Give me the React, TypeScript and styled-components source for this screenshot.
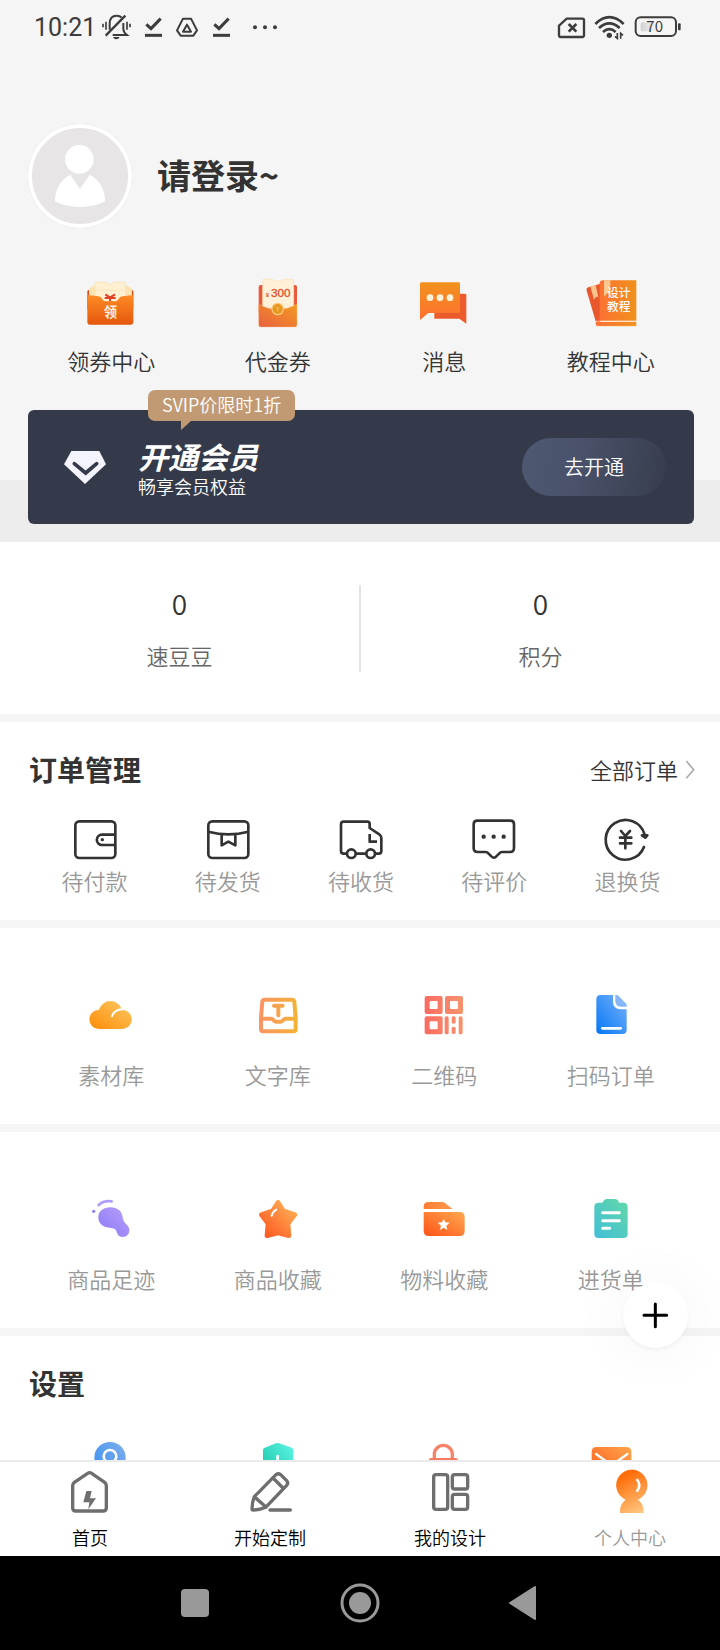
import React from "react";
import styled, { createGlobalStyle } from "styled-components";

const GlobalStyle = createGlobalStyle`
  *, *::before, *::after { box-sizing: border-box; }
  body {
    margin: 0;
    font-family: "Noto Sans CJK SC", "Noto Sans", sans-serif;
    font-weight: 350;
    color: #333;
    background: #fff;
  }
  h1, h2, p { margin: 0; }
  a { color: inherit; text-decoration: none; }
  button { padding: 0; border: 0; background: none; color: inherit; font: inherit; cursor: pointer; }
  svg { display: block; flex: none; overflow: visible; }
`;

/* ---------- layout ---------- */

const Screen = styled.div`
  position: relative;
  display: flex;
  flex-direction: column;
  height: 100vh;
`;

const Content = styled.main`
  flex: 1;
  min-height: 0;
  overflow-y: auto;
  scrollbar-width: none;
`;

const Header = styled.header`
  padding-bottom: 18px;
  background: linear-gradient(to top, #ededed 62px, #f5f5f5 62px);
`;

const StatusBar = styled.div`
  display: flex;
  align-items: center;
  justify-content: space-between;
  height: 54px;
  padding: 0 39px 0 34px;
  color: #3c3c3c;
`;

const StatusGroup = styled.div<{ $gap: number }>`
  display: flex;
  align-items: center;
  gap: ${(p) => p.$gap}px;
`;

const Clock = styled.time`
  width: 52px;
  padding-top: 2px;
  font: 400 25px/30px Roboto, sans-serif;
  white-space: nowrap;
`;

const More = styled.span`
  padding-left: 8px;
`;

const Profile = styled.a`
  display: flex;
  align-items: center;
  gap: 25px;
  padding: 70px 28px 49px;
`;

const Avatar = styled.span`
  width: 104px;
  height: 104px;
  border: 4px solid #fff;
  border-radius: 50%;
  background: #e7e5e6;
  box-shadow: 0 0 1px #ccc;
`;

const ProfileName = styled.h1`
  padding-bottom: 2px;
  font-size: 34px;
  line-height: 48px;
  font-weight: 700;
`;

const Row = styled.div`
  display: flex;
  padding: 0 26px 0 28px;
`;

const Item = styled.a<{ $gap: number; $muted?: boolean }>`
  display: flex;
  flex: 1 1 0;
  flex-direction: column;
  align-items: center;
  gap: ${(p) => p.$gap}px;
  font-size: 22px;
  line-height: 32px;
  color: ${(p) => (p.$muted ? "#999" : "#333")};
`;

const VipCard = styled.section`
  position: relative;
  display: flex;
  align-items: center;
  height: 114px;
  margin: 34px 26px 0 28px;
  padding: 0 28px 0 36px;
  border-radius: 6px;
  background: #343a4a;
  color: #fff;
`;

const VipText = styled.div`
  flex: 1;
  padding: 2px 0 0 32px;
`;

const VipTitle = styled.h2`
  font-size: 30px;
  line-height: 36px;
  font-style: italic;
  font-weight: 700;
`;

const VipNote = styled.p`
  font-size: 18px;
  line-height: 24px;
`;

const VipButton = styled.button`
  width: 144px;
  height: 58px;
  border-radius: 29px;
  background: linear-gradient(100deg, #4e5871 0%, #49526a 40%, #373d4d 100%);
  font-size: 20px;
  line-height: 28px;
`;

const VipBadge = styled.span`
  position: absolute;
  top: -20px;
  left: 120px;
  padding: 0 14px 2px;
  border-radius: 7px;
  background: #c19a74;
  font-size: 18px;
  line-height: 29px;
  white-space: nowrap;

  &::after {
    content: "";
    position: absolute;
    top: 100%;
    left: 33px;
    border-top: 9px solid #c19a74;
    border-right: 10px solid transparent;
  }
`;

const Panel = styled.section<{ $pad: string }>`
  padding: ${(p) => p.$pad};
  background: #fff;
  & + & { border-top: 8px solid #f5f5f5; }
`;

const Stats = styled.div`
  display: flex;
`;

const Stat = styled.a`
  flex: 1 1 0;
  height: 87px;
  text-align: center;
  & + & { border-left: 2px solid #e4e4e4; }
`;

const StatValue = styled.p`
  font-size: 28px;
  line-height: 36px;
`;

const StatLabel = styled.p`
  padding-top: 18px;
  font-size: 22px;
  line-height: 32px;
  color: #666;
`;

const PanelHead = styled.div<{ $gap: number }>`
  display: flex;
  align-items: center;
  justify-content: space-between;
  padding: 0 25px ${(p) => p.$gap}px 29px;
`;

const PanelTitle = styled.h2`
  font-size: 28px;
  line-height: 40px;
  font-weight: 700;
`;

const AllLink = styled.a`
  display: flex;
  align-items: center;
  gap: 8px;
  font-size: 22px;
  line-height: 32px;
`;

const AddButton = styled.button`
  position: absolute;
  right: 32px;
  bottom: 302px;
  display: grid;
  place-items: center;
  width: 65px;
  height: 65px;
  border-radius: 50%;
  background: #fff;
  box-shadow: 0 2px 5px rgba(0, 0, 0, 0.06), 0 2px 60px 6px rgba(0, 0, 0, 0.04);
`;

const TabBar = styled.nav`
  display: flex;
  padding: 8px 0 7px;
  border-top: 2px solid #ebebeb;
  background: #fff;
`;

const Tab = styled.a<{ $active?: boolean }>`
  display: flex;
  flex: 1 1 0;
  flex-direction: column;
  align-items: center;
  gap: 11px;
  font-size: 18px;
  line-height: 24px;
  color: ${(p) => (p.$active ? "#999" : "#000")};
`;

const SystemBar = styled.div`
  display: flex;
  align-items: center;
  justify-content: center;
  gap: 125px;
  height: 94px;
  background: #000;
`;

/* ---------- icons ---------- */

type Stop = [string, string];

const Fade = ({ id, colors, dir = "up" }: { id: string; colors: Stop; dir?: "up" | "down" | "right" | "diag" }) => {
  const ends = {
    up: { x1: 0, y1: 1, x2: 1, y2: 0 },
    down: { x1: 0, y1: 0, x2: 0, y2: 1 },
    right: { x1: 0, y1: 0, x2: 1, y2: 0 },
    diag: { x1: 0, y1: 0, x2: 1, y2: 1 },
  }[dir];
  return (
    <linearGradient id={id} {...ends}>
      <stop offset="0" stopColor={colors[0]} />
      <stop offset="1" stopColor={colors[1]} />
    </linearGradient>
  );
};

const Art = ({ box, w, h = w, children }: { box: string; w: number; h?: number; children: React.ReactNode }) => (
  <svg viewBox={box} width={w} height={h} fill="none" aria-hidden="true">
    {children}
  </svg>
);

const MutedBell = () => (
  <Art box="300 41 90 78" w={30} h={26}>
    <g stroke="#3c3c3c" strokeWidth="6">
      <path d="M329 88V70q0-24 21-24q10 0 15 6M370 68V86q0 9 11 18H338" />
      <path d="M317 106 376 46" strokeWidth="7" />
      <path d="M309 70V81M318 64V88M381 64V88M390 70V81" strokeWidth="5" />
    </g>
    <path d="M339 110H359q-3 7-10 7t-10-7Z" fill="#3c3c3c" />
  </Art>
);

const DoneMark = () => (
  <Art box="432 41 54 78" w={18} h={26}>
    <path d="M439 72 453 85 482 55" stroke="#3c3c3c" strokeWidth="9" />
    <path d="M435 105H486" stroke="#3c3c3c" strokeWidth="9" />
  </Art>
);

const DriveMark = () => (
  <Art box="528 41 66 78" w={22} h={26}>
    <g stroke="#3c3c3c" strokeWidth="6" strokeLinejoin="round">
      <path d="M549 55H573L591 90 580 106H542L531 90Z" />
      <path d="M561 73 573 94H549Z" />
    </g>
  </Art>
);

const MoreDots = () => (
  <Art box="756 41 78 78" w={26} h={26}>
    <g fill="#3c3c3c">
      <circle cx="765" cy="81" r="6" />
      <circle cx="795" cy="81" r="6" />
      <circle cx="825" cy="81" r="6" />
    </g>
  </Art>
);

const NoSim = () => (
  <Art box="594 41 81 78" w={27} h={26}>
    <path d="M620 55H667q5 0 5 5V105q0 5-5 5H602q-5 0-5-5V76Z" stroke="#3c3c3c" strokeWidth="7" />
    <path d="M626 71 649 94M649 71 626 94" stroke="#3c3c3c" strokeWidth="8" />
  </Art>
);

const Wifi = () => (
  <Art box="705 41 90 78" w={30} h={26}>
    <g stroke="#3c3c3c" strokeWidth="8">
      <path d="M706 71Q748 30 791 71" />
      <path d="M717 83Q748 55 779 83" />
      <path d="M729 95Q748 78 767 95" />
    </g>
    <circle cx="748" cy="105" r="8" fill="#3c3c3c" />
    <path d="M772 98V114L765 108M782 115V99L789 105" stroke="#3c3c3c" strokeWidth="5" />
  </Art>
);

const Battery = () => (
  <Art box="825 41 138 78" w={46} h={26}>
    <defs>
      <Fade id="charge" colors={["#d2d2d2", "#f4f4f4"]} dir="right" />
    </defs>
    <rect x="842" y="66" width="46" height="27" rx="4" fill="url(#charge)" />
    <rect x="827" y="51" width="121" height="56" rx="15" stroke="#3c3c3c" strokeWidth="6" />
    <rect x="954" y="69" width="8" height="21" rx="3" fill="#3c3c3c" />
    <text x="884" y="96" textAnchor="middle" fontSize="45" fontWeight="400" fill="#3c3c3c">70</text>
  </Art>
);

const Person = () => (
  <Art box="96 384 288 288" w={96}>
    <g fill="#fff">
      <circle cx="238" cy="478" r="43" />
      <path d="M211 524 240 568 269 524Q312 546 316 604Q282 621 240 621T164 604Q168 546 211 524Z" />
    </g>
  </Art>
);

const CouponIcon = () => (
  <Art box="256 51 156 156" w={52}>
    <defs>
      <Fade id="coupon" colors={["#ff8b25", "#e4570d"]} dir="down" />
    </defs>
    <rect x="263" y="90" width="138" height="60" rx="5" fill="#dd4a14" />
    <path d="M268 84 290 74H374L397 84V112H268Z" fill="#fde3b4" />
    <path d="M290 67H321q10 14 22 0H374q4 0 4 4V125H286V71q0-4 4-4Z" fill="#fff0d2" stroke="#fbdca6" strokeWidth="2" />
    <path d="M290 91H374" stroke="#f6d29a" strokeWidth="2" strokeDasharray="5 4" />
    <path d="M317 103 331 113 346 103M331 111V124M315 114H348" stroke="#e2432a" strokeWidth="6" />
    <path d="M263 105 296 109q8 1 11 7q4 8 12 8H345q8 0 12-8q3-6 11-7L401 105V187q0 7-7 7H270q-7 0-7-7Z" fill="url(#coupon)" />
    <text x="332" y="172" textAnchor="middle" fontSize="40" fontWeight="700" fill="#fff3e2">领</text>
  </Art>
);

const VoucherIcon = () => (
  <Art box="755 51 156 156" w={52}>
    <defs>
      <Fade id="voucher" colors={["#e8603f", "#f49c22"]} />
    </defs>
    <rect x="775" y="75" width="115" height="90" rx="6" fill="#e8583a" />
    <path d="M787 62q0-4 4-4H816q17 12 34 0H876q4 0 4 4V160H787Z" fill="#fff1d8" stroke="#fbe0b4" strokeWidth="2" />
    <text x="801" y="111" textAnchor="middle" fontSize="17" fontWeight="700" fill="#e2532f">¥</text>
    <text x="841" y="112" textAnchor="middle" fontSize="35" fontWeight="400" fontFamily="Liberation Sans, sans-serif" fill="#e2532f" stroke="#e2532f">300</text>
    <path d="M775 132Q800 148 832 148T890 132V195q0 6-6 6H781q-6 0-6-6Z" fill="url(#voucher)" stroke="#ffc58c" strokeWidth="1" />
    <circle cx="832" cy="147" r="17" fill="#e8981e" stroke="#fbc877" strokeWidth="4" />
    <path d="M827 141 832 147 837 141M832 147V155" stroke="#fbd190" strokeWidth="2" />
  </Art>
);

const MessageIcon = () => (
  <Art box="175 51 156 156" w={52}>
    <defs>
      <Fade id="message" colors={["#f2921d", "#fd7031"]} dir="down" />
    </defs>
    <path d="M290 101H316q4 0 4 4V191L299 176H224V150H290Z" fill="#ec5b2c" />
    <path d="M185 67H297q4 0 4 4V155q0 4-4 4H206L181 180V71q0-4 4-4Z" fill="url(#message)" />
    <g fill="#fff1d8">
      <circle cx="211" cy="113" r="10" />
      <circle cx="241" cy="113" r="10" />
      <circle cx="271" cy="113" r="10" />
    </g>
  </Art>
);

const CourseIcon = () => (
  <Art box="674 51 156 156" w={52}>
    <defs>
      <Fade id="course" colors={["#fe7034", "#f0911b"]} dir="right" />
    </defs>
    <path d="M684 82 720 71V188L706 184 679 92q-2-8 5-10Z" fill="#e9582d" />
    <path d="M690 79 706 75 714 112 707 110 701 119Z" fill="#fbc48d" />
    <path d="M728 61H828V182H711q7-1 7-8V71q0-10 10-10Z" fill="url(#course)" />
    <path d="M707 186H828V198H713q-7 0-7-6Z" fill="url(#course)" />
    <path d="M707 184H828M707 199H828" stroke="#ffd9b0" strokeWidth="2" />
    <path d="M731 61H750V110L741 99 731 110Z" fill="#fcc88f" />
    <g fontSize="35" fontWeight="500" fill="#fff">
      <text x="740" y="111">设计</text>
      <text x="740" y="154">教程</text>
    </g>
  </Art>
);

const Diamond = () => (
  <Art box="192 570 126 99" w={42} h={33}>
    <path d="M214 570H298L318 610 255 669 192 610Z" fill="#f3f4ff" />
    <path d="M223 608 257 636 290 608" stroke="#343a4a" strokeWidth="11" strokeLinecap="round" />
  </Art>
);

const Arrow = () => (
  <Art box="978 91 27 57" w={9} h={19}>
    <path d="M979 94 1001 120 979 146" stroke="#aaa" strokeWidth="5" />
  </Art>
);

const LineArt = ({ box, children }: { box: string; children: React.ReactNode }) => (
  <Art box={box} w={48}>
    <g stroke="#333" strokeWidth="8" strokeLinejoin="round">{children}</g>
  </Art>
);

const WalletIcon = () => (
  <LineArt box="212 258 144 144">
    <rect x="225" y="274" width="120" height="110" rx="12" />
    <path d="M345 314H305a15.500 15.500 0 0 0 0 31H345" />
    <circle cx="306" cy="329" r="5" fill="#333" stroke="none" />
  </LineArt>
);

const PackageIcon = () => (
  <LineArt box="611 258 144 144">
    <rect x="624" y="274" width="120" height="110" rx="12" />
    <path d="M624 305Q684 321 744 305M664 315V346L684 335 705 346V315" />
  </LineArt>
);

const TruckIcon = () => (
  <LineArt box="1011 258 144 144">
    <path d="M1040 371H1031q-8 0-8-8V283q0-8 8-8H1102q7 0 7 7V294L1139 314q5 4 5 10V363q0 8-8 8H1126M1068 371H1098M1109 312V335H1131" />
    <circle cx="1054" cy="371" r="13" />
    <circle cx="1112" cy="371" r="13" />
  </LineArt>
);

const ReviewIcon = () => (
  <LineArt box="331 258 144 144">
    <path d="M353 272H452q11 0 11 11V354q0 12-12 12H427q-5 0-8 4L409 380q-7 6-13 0L386 370q-3-4-8-4H354q-12 0-12-12V283q0-11 11-11Z" />
    <g fill="#333" stroke="none">
      <circle cx="372" cy="320" r="6.500" />
      <circle cx="402" cy="320" r="6.500" />
      <circle cx="432" cy="320" r="6.500" />
    </g>
  </LineArt>
);

const RefundIcon = () => (
  <LineArt box="730 258 144 144">
    <path d="M853 351A59.500 59.500 0 1 1 855 314" strokeLinecap="round" />
    <path d="M847 316 863 316 857 323Z" fill="#333" />
    <path d="M784 303 797 318 811 303M781 323H815M781 340H815M797 318V355" strokeLinecap="round" />
  </LineArt>
);

const CloudIcon = () => (
  <Art box="28 24 132 132" w={44}>
    <defs>
      <Fade id="cloud" colors={["#fd8b06", "#fdcb66"]} />
    </defs>
    <path d="M58 132A29 29 0 0 1 58 74A36 36 0 0 1 127 74A29 29 0 0 1 128 132Z" fill="url(#cloud)" />
    <path d="M97 94Q103 74 129 73" stroke="#fff" strokeWidth="6" strokeLinecap="round" />
  </Art>
);

const TextBoxIcon = () => (
  <Art box="527 24 132 132" w={44}>
    <defs>
      <linearGradient id="textbox" gradientUnits="userSpaceOnUse" x1="540" y1="0" x2="650" y2="0">
        <stop offset="0" stopColor="#fb9463" />
        <stop offset="1" stopColor="#f3b236" />
      </linearGradient>
    </defs>
    <g stroke="url(#textbox)" strokeWidth="12" strokeLinejoin="round">
      <path d="M552 44H636q5 0 6 6L646 98V132q0 7-7 7H549q-7 0-7-7V98L546 50q1-6 6-6Z" />
      <path d="M543 101H572q5 0 8 5q3 4 7 4H601q4 0 7-4q3-5 8-5H645" />
      <path d="M581 62H607M594 62V91" strokeLinecap="round" />
    </g>
  </Art>
);

const QrIcon = () => (
  <Art box="37 24 132 132" w={44}>
    <defs>
      <linearGradient id="qr" gradientUnits="userSpaceOnUse" x1="45" y1="0" x2="159" y2="0">
        <stop offset="0" stopColor="#fb6b60" />
        <stop offset="1" stopColor="#f6946e" />
      </linearGradient>
    </defs>
    <g fill="url(#qr)">
      <rect x="45" y="33" width="54" height="54" rx="6" />
      <rect x="106" y="33" width="54" height="54" rx="6" />
      <rect x="45" y="94" width="54" height="54" rx="6" />
      <rect x="105" y="94" width="12" height="54" rx="5" />
      <rect x="126" y="94" width="12" height="22" rx="5" />
      <rect x="126" y="125" width="12" height="22" rx="5" />
      <rect x="147" y="94" width="12" height="54" rx="5" />
    </g>
    <g fill="#fff">
      <rect x="60" y="48" width="24" height="24" rx="3" />
      <rect x="121" y="48" width="24" height="24" rx="3" />
      <rect x="60" y="109" width="24" height="24" rx="3" />
    </g>
  </Art>
);

const FileIcon = () => (
  <Art box="536 24 132 132" w={44}>
    <defs>
      <Fade id="file" colors={["#0577f6", "#79b3f9"]} />
    </defs>
    <path d="M571 30H608V49q0 24 23 24H649V134q0 13-13 13H571q-13 0-13-13V43q0-13 13-13Z" fill="url(#file)" />
    <path d="M615 30H622L649 58V65H632q-17 0-17-17Z" fill="#84b7f8" />
    <path d="M576 130H631" stroke="#fff" strokeWidth="8" strokeLinecap="round" />
  </Art>
);

const FootprintIcon = () => (
  <Art box="28 636 132 132" w={44}>
    <defs>
      <Fade id="foot" colors={["#8c77f6", "#b8a1fb"]} />
    </defs>
    <path d="M56 697C56 678 72 667 92 667C115 667 127 680 129 697C130 708 136 714 143 721C151 730 151 744 143 751C133 760 116 757 112 744C109 733 106 730 94 729C70 728 56 715 56 697Z" fill="url(#foot)" />
    <path d="M57 660Q72 646 96 649" stroke="#b09cf9" strokeWidth="8" strokeLinecap="round" />
    <circle cx="42" cy="679" r="5" fill="#9580f5" />
  </Art>
);

const StarIcon = () => (
  <Art box="527 636 132 132" w={44}>
    <defs>
      <linearGradient id="star" gradientUnits="userSpaceOnUse" x1="550" y1="755" x2="640" y2="665">
        <stop offset="0" stopColor="#ff5620" />
        <stop offset="1" stopColor="#feae55" />
      </linearGradient>
    </defs>
    <path d="M593 652 609 677 644 689 623 716 626 752 593 744 560 752 563 716 543 689 577 677Z" fill="url(#star)" stroke="url(#star)" strokeWidth="14" strokeLinejoin="round" />
    <path d="M574 692Q577 680 588 674" stroke="#fff" strokeWidth="6" strokeLinecap="round" />
  </Art>
);

const FolderIcon = () => (
  <Art box="37 636 132 132" w={44}>
    <defs>
      <Fade id="folder" colors={["#fe5318", "#fea94f"]} />
      <Fade id="folderTab" colors={["#fd7d34", "#fc9a50"]} dir="right" />
    </defs>
    <path d="M56 651H97q6 0 10 4L129 672H42V665q0-14 14-14Z" fill="url(#folderTab)" />
    <path d="M42 681H150q15 0 15 15V738q0 15-15 15H57q-15 0-15-15Z" fill="url(#folder)" />
    <path d="M102 701 107 712 120 713 110 722 113 735 102 728 91 735 94 722 84 713 97 712Z" fill="#fff" />
  </Art>
);

const ClipboardIcon = () => (
  <Art box="536 636 132 132" w={44}>
    <defs>
      <Fade id="clip" colors={["#40bfd8", "#64d8a7"]} />
    </defs>
    <path d="M565 653H577q3-11 13-11H613q10 0 13 11H639q13 0 13 13V746q0 13-13 13H565q-13 0-13-13V666q0-13 13-13Z" fill="url(#clip)" />
    <path d="M577 683H627M577 707H627M577 730H598" stroke="#fff" strokeWidth="9" strokeLinecap="round" />
  </Art>
);

const PinIcon = () => (
  <Art box="268 420 132 132" w={44}>
    <defs>
      <Fade id="pin" colors={["#2f8ff0", "#80aeee"]} />
    </defs>
    <path d="M331 426a47 47 0 0 1 47 47q0 34-47 72q-47-38-47-72a47 47 0 0 1 47-47Z" fill="url(#pin)" />
    <circle cx="331" cy="469" r="19" stroke="#fff" strokeWidth="8" />
  </Art>
);

const ShieldIcon = () => (
  <Art box="767 420 132 132" w={44}>
    <defs>
      <Fade id="shield" colors={["#12bfa0", "#5ef6e6"]} />
    </defs>
    <path d="M827 430q5-2 10 0L874 443q5 2 5 7V495q0 30-46 50q-45-20-45-50V450q0-5 5-7Z" fill="url(#shield)" />
    <path d="M832 468V510M812 490H852" stroke="#fff" strokeWidth="8" strokeLinecap="round" />
  </Art>
);

const LockIcon = () => (
  <Art box="187 570 132 132" w={44}>
    <path d="M224 630V613a27 27 0 0 1 54 0V630" stroke="#f58468" strokeWidth="10" />
    <rect x="207" y="624" width="88" height="66" rx="8" fill="#f87a60" />
  </Art>
);

const MailIcon = () => (
  <Art box="686 570 132 132" w={44}>
    <defs>
      <Fade id="mail" colors={["#ff5a1c", "#fea54c"]} />
    </defs>
    <rect x="694" y="591" width="119" height="96" rx="14" fill="url(#mail)" />
    <path d="M707 612 740 636q14 9 28 0L801 612" stroke="#fff" strokeWidth="7" strokeLinecap="round" />
  </Art>
);

const HomeIcon = () => (
  <Art box="204 510 132 132" w={44}>
    <path d="M263 520q6-4 12 0L314 547q5 4 5 10V623q0 10-10 10H228q-10 0-10-10V557q0-6 5-10Z" stroke="#6e6e6e" strokeWidth="10" />
    <path d="M259 573H275L270 595H288L265 628 268 607H250Z" fill="#6e6e6e" />
  </Art>
);

const PencilIcon = () => (
  <Art box="744 510 132 132" w={44}>
    <g stroke="#6e6e6e" strokeWidth="10" strokeLinejoin="round" strokeLinecap="round">
      <path d="M763 590 828 524q7-6 14 0L860 542q6 7 0 14L797 622Q780 630 760 630q-4 0-4-4Q756 608 763 590Z" />
      <path d="M819 534 849 564M765 592 797 620" />
      <path d="M810 630H871" />
    </g>
  </Art>
);

const LayoutIcon = () => (
  <Art box="204 660 132 132" w={44}>
    <g stroke="#6e6e6e" strokeWidth="10">
      <rect x="221" y="674" width="42" height="104" rx="7" />
      <rect x="277" y="674" width="46" height="43" rx="7" />
      <rect x="277" y="733" width="46" height="45" rx="7" />
    </g>
  </Art>
);

const MeIcon = () => (
  <Art box="744 660 132 132" w={44}>
    <defs>
      <linearGradient id="me" gradientUnits="userSpaceOnUse" x1="785" y1="680" x2="840" y2="790">
        <stop offset="0" stopColor="#ff6d08" />
        <stop offset="1" stopColor="#ffc681" />
      </linearGradient>
    </defs>
    <path d="M797 749A47 47 0 1 1 834 749Q851 762 851 783V789H780V783Q780 762 797 749Z" fill="url(#me)" />
    <path d="M832 690Q844 706 832 722" stroke="#fff" strokeWidth="8" strokeLinecap="round" />
  </Art>
);

/* ---------- data ---------- */

const shortcuts = [
  { label: "领券中心", Icon: CouponIcon },
  { label: "代金券", Icon: VoucherIcon },
  { label: "消息", Icon: MessageIcon },
  { label: "教程中心", Icon: CourseIcon },
];

const orders = [
  { label: "待付款", Icon: WalletIcon },
  { label: "待发货", Icon: PackageIcon },
  { label: "待收货", Icon: TruckIcon },
  { label: "待评价", Icon: ReviewIcon },
  { label: "退换货", Icon: RefundIcon },
];

const library = [
  { label: "素材库", Icon: CloudIcon },
  { label: "文字库", Icon: TextBoxIcon },
  { label: "二维码", Icon: QrIcon },
  { label: "扫码订单", Icon: FileIcon },
];

const collections = [
  { label: "商品足迹", Icon: FootprintIcon },
  { label: "商品收藏", Icon: StarIcon },
  { label: "物料收藏", Icon: FolderIcon },
  { label: "进货单", Icon: ClipboardIcon },
];

const settings = [PinIcon, ShieldIcon, LockIcon, MailIcon];

const tabs = [
  { label: "首页", Icon: HomeIcon },
  { label: "开始定制", Icon: PencilIcon },
  { label: "我的设计", Icon: LayoutIcon },
  { label: "个人中心", Icon: MeIcon, active: true },
];

const stats = [
  { label: "速豆豆", value: 0 },
  { label: "积分", value: 0 },
];

const ItemRow = ({ items, gap, muted }: { items: { label: string; Icon: React.FC }[]; gap: number; muted?: boolean }) => (
  <Row>
    {items.map(({ label, Icon }) => (
      <Item key={label} href="#" $gap={gap} $muted={muted}>
        <Icon />
        {label}
      </Item>
    ))}
  </Row>
);

export default function App() {
  return (
    <>
      <GlobalStyle />
      <Screen>
        <Content>
          <Header>
            <StatusBar>
              <StatusGroup $gap={14}>
                <Clock>10:21</Clock>
                <MutedBell />
                <DoneMark />
                <DriveMark />
                <DoneMark />
                <More>
                  <MoreDots />
                </More>
              </StatusGroup>
              <StatusGroup $gap={10}>
                <NoSim />
                <Wifi />
                <Battery />
              </StatusGroup>
            </StatusBar>
            <Profile href="#">
              <Avatar>
                <Person />
              </Avatar>
              <ProfileName>请登录~</ProfileName>
            </Profile>
            <ItemRow items={shortcuts} gap={15} />
            <VipCard>
              <VipBadge>SVIP价限时1折</VipBadge>
              <Diamond />
              <VipText>
                <VipTitle>开通会员</VipTitle>
                <VipNote>畅享会员权益</VipNote>
              </VipText>
              <VipButton type="button">去开通</VipButton>
            </VipCard>
          </Header>

          <Panel $pad="43px 0 42px">
            <Stats>
              {stats.map((s) => (
                <Stat key={s.label} href="#">
                  <StatValue>{s.value}</StatValue>
                  <StatLabel>{s.label}</StatLabel>
                </Stat>
              ))}
            </Stats>
          </Panel>

          <Panel $pad="27px 0 24px">
            <PanelHead $gap={27}>
              <PanelTitle>订单管理</PanelTitle>
              <AllLink href="#">
                全部订单
                <Arrow />
              </AllLink>
            </PanelHead>
            <ItemRow items={orders} gap={0} muted />
          </Panel>

          <Panel $pad="65px 0 34px">
            <ItemRow items={library} gap={21} muted />
          </Panel>

          <Panel $pad="65px 0 34px">
            <ItemRow items={collections} gap={21} muted />
          </Panel>

          <Panel $pad="27px 0 34px">
            <PanelHead $gap={37}>
              <PanelTitle>设置</PanelTitle>
            </PanelHead>
            <Row>
              {settings.map((Icon, i) => (
                <Item key={i} href="#" $gap={21}>
                  <Icon />
                </Item>
              ))}
            </Row>
          </Panel>
        </Content>

        <AddButton type="button" aria-label="添加">
          <Art box="850 159 75 75" w={25}>
            <path d="M853 196H921M887 162V230" stroke="#000" strokeWidth="9" strokeLinecap="round" />
          </Art>
        </AddButton>

        <TabBar>
          {tabs.map(({ label, Icon, active }) => (
            <Tab key={label} href="#" $active={active}>
              <Icon />
              {label}
            </Tab>
          ))}
        </TabBar>

        <SystemBar>
          <Art box="0 0 40 40" w={40}>
            <rect x="6" y="6" width="28" height="28" rx="4" fill="#999" />
          </Art>
          <Art box="0 0 40 40" w={40}>
            <circle cx="20" cy="20" r="18" stroke="#999" strokeWidth="3" />
            <circle cx="20" cy="20" r="11" fill="#999" />
          </Art>
          <Art box="0 0 40 40" w={40}>
            <path d="M5 20 30 4V36Z" fill="#999" stroke="#999" strokeWidth="2" strokeLinejoin="round" />
          </Art>
        </SystemBar>
      </Screen>
    </>
  );
}
